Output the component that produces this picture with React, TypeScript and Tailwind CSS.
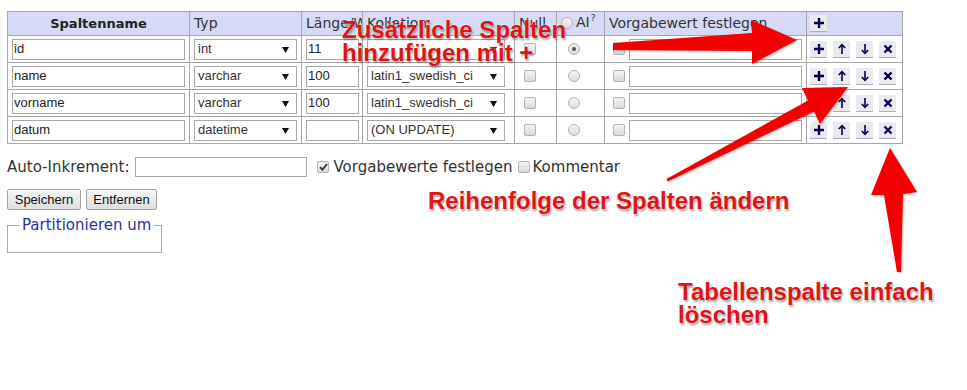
import React from 'react'

const rows = [
  { name: 'id', type: 'int', len: '11', coll: '', ai: true },
  { name: 'name', type: 'varchar', len: '100', coll: 'latin1_swedish_ci', ai: false },
  { name: 'vorname', type: 'varchar', len: '100', coll: 'latin1_swedish_ci', ai: false },
  { name: 'datum', type: 'datetime', len: '', coll: '(ON UPDATE)', ai: false },
]

const arial = "font-['Liberation_Sans',Arial,sans-serif]"

function Checkbox({ checked = false }: { checked?: boolean }) {
  return (
    <span className="inline-flex w-[12px] h-[12px] items-center justify-center rounded-[2px] border border-[#b3b3b3] bg-linear-to-b from-[#f4f4f4] to-[#d9d9d9] align-middle">
      {checked && (
        <svg width="9" height="8" viewBox="0 0 9 8">
          <path d="M1 4.2 L3.4 6.6 L8 1.2" fill="none" stroke="#333" strokeWidth="1.8" />
        </svg>
      )}
    </span>
  )
}

function Radio({ checked = false }: { checked?: boolean }) {
  return (
    <span className="inline-flex w-[12px] h-[12px] items-center justify-center rounded-full border border-[#b3b3b3] bg-linear-to-b from-[#f4f4f4] to-[#dcdcdc] align-middle">
      {checked && <span className="w-[4px] h-[4px] rounded-full bg-[#555]" />}
    </span>
  )
}

function Select({ value, width }: { value: string; width: string }) {
  return (
    <div className={`${width} h-[21px] flex items-center justify-between border border-[#a9a9a9] bg-white pl-[3px] pr-[7px] text-[13px] text-[#333] ${arial}`}>
      <span className="whitespace-nowrap">{value}</span>
      <svg width="7" height="7" viewBox="0 0 7 7">
        <polygon points="0,1 7,1 3.5,7" fill="#111" />
      </svg>
    </div>
  )
}

function TextInput({ value, width }: { value: string; width: string }) {
  return (
    <div className={`${width} h-[21px] flex items-center border border-[#a9a9a9] bg-white pl-[1px] text-[13px] text-[#222] ${arial}`}>
      {value}
    </div>
  )
}

function ActionButton({ kind }: { kind: 'plus' | 'up' | 'down' | 'del' }) {
  return (
    <span className="inline-flex w-[17px] h-[17px] items-center justify-center bg-[#e9e9ee] border-b border-[#aeaeb8]">
      <svg width="12" height="12" viewBox="0 0 12 12" fill="none" stroke="#000050">
        {kind === 'plus' && <path d="M6 1 V11 M1 6 H11" strokeWidth="2.4" />}
        {kind === 'up' && (
          <>
            <path d="M6 2.5 V11" strokeWidth="1.6" />
            <path d="M2.8 5 L6 1.6 L9.2 5" strokeWidth="1.6" />
          </>
        )}
        {kind === 'down' && (
          <>
            <path d="M6 1 V9.5" strokeWidth="1.6" />
            <path d="M2.8 7 L6 10.4 L9.2 7" strokeWidth="1.6" />
          </>
        )}
        {kind === 'del' && <path d="M2.5 2.5 L9.5 9.5 M9.5 2.5 L2.5 9.5" strokeWidth="2.4" />}
      </svg>
    </span>
  )
}

const th = 'h-[24px] border border-[#a7a7a7] bg-[#d6daf6] px-[4px] font-normal text-left text-[14px] whitespace-nowrap overflow-hidden'
const td = 'h-[27px] border border-[#a7a7a7] p-0 align-middle'
const note = "absolute font-['Liberation_Sans',Arial,sans-serif] font-bold text-[24px] leading-[23px] text-[#dc1616] whitespace-nowrap [text-shadow:0_0_2px_#fff,1px_2px_2px_rgba(0,0,0,0.4)]"

export default function App() {
  return (
    <div className="relative w-[967px] h-[390px] overflow-hidden bg-white pt-[11px] pl-[7px] font-['DejaVu_Sans',Verdana,sans-serif] text-[15px] text-[#333]">
      {/* Structure table */}
      <table className="table-fixed border-collapse w-[895px]">
        <colgroup>
          <col className="w-[182px]" />
          <col className="w-[112px]" />
          <col className="w-[61px]" />
          <col className="w-[152px]" />
          <col className="w-[42px]" />
          <col className="w-[48px]" />
          <col className="w-[202px]" />
          <col className="w-[96px]" />
        </colgroup>
        <thead>
          <tr>
            <th className={`${th} !text-center !font-bold !text-[13px] text-[#222]`}>Spaltenname</th>
            <th className={th}>Typ</th>
            <th className={th}>Länge/Werte</th>
            <th className={th}>Kollation</th>
            <th className={th}>Null</th>
            <th className={th}>
              <span className="inline-flex items-center gap-[3px]">
                <Radio />
                <span>AI</span>
                <sup className="text-[9px] -ml-[2px]">?</sup>
              </span>
            </th>
            <th className={th}>Vorgabewert festlegen</th>
            <th className={`${th} !pl-[3px]`}>
              <div className="flex">
                <ActionButton kind="plus" />
              </div>
            </th>
          </tr>
        </thead>
        <tbody>
          {rows.map((r) => (
            <tr key={r.name}>
              <td className={`${td} pl-[4px]`}>
                <TextInput value={r.name} width="w-[173px]" />
              </td>
              <td className={`${td} pl-[4px]`}>
                <Select value={r.type} width="w-[103px]" />
              </td>
              <td className={`${td} pl-[4px]`}>
                <TextInput value={r.len} width="w-[53px]" />
              </td>
              <td className={`${td} pl-[4px]`}>
                <Select value={r.coll} width="w-[138px]" />
              </td>
              <td className={`${td} pl-[9px]`}>
                <Checkbox />
              </td>
              <td className={`${td} pl-[11px]`}>
                <Radio checked={r.ai} />
              </td>
              <td className={`${td} pl-[8px]`}>
                <div className="flex items-center gap-[4px]">
                  <Checkbox />
                  <TextInput value="" width="w-[173px]" />
                </div>
              </td>
              <td className={`${td} pl-[3px]`}>
                <div className="flex gap-[6px]">
                  <ActionButton kind="plus" />
                  <ActionButton kind="up" />
                  <ActionButton kind="down" />
                  <ActionButton kind="del" />
                </div>
              </td>
            </tr>
          ))}
        </tbody>
      </table>

      {/* Options */}
      <div className="mt-[13px] h-[20px] leading-[20px] flex items-center">
        <span>Auto-Inkrement:</span>
        <div className="ml-[6px] w-[172px] h-[20px] border border-[#a9a9a9] bg-white" />
        <span className="ml-[10px] flex">
          <Checkbox checked />
        </span>
        <span className="ml-[4px]">Vorgabewerte festlegen</span>
        <span className="ml-[5px] flex">
          <Checkbox />
        </span>
        <span className="ml-[3px]">Kommentar</span>
      </div>

      <div className={`mt-[12px] flex gap-[5px] ${arial}`}>
        <button className="w-[74px] h-[21px] rounded-[2px] border border-[#a3a3a3] bg-linear-to-b from-[#f6f6f6] to-[#dedede] text-[13px] leading-[19px] text-[#111]">
          Speichern
        </button>
        <button className="w-[71px] h-[21px] rounded-[2px] border border-[#a3a3a3] bg-linear-to-b from-[#f6f6f6] to-[#dedede] text-[13px] leading-[19px] text-[#111]">
          Entfernen
        </button>
      </div>

      <fieldset className="mt-[7px] w-[155px] h-[36px] border border-[#a9a9a9] pl-[11px]">
        <legend className="px-[3px] text-[#30309a] leading-[16px]">Partitionieren um</legend>
      </fieldset>

      {/* Screenshot annotations */}
      <svg
        className="absolute inset-0 pointer-events-none [filter:drop-shadow(1px_1px_1px_rgba(0,0,0,0.3))]"
        width="967"
        height="390"
        viewBox="0 0 967 390"
      >
        <polygon points="613,43 752,33 751,20 797,40 752,64 752,51 613,50" fill="#f40000" />
        <polygon points="666.5,179 808,100.5 802,88 848,87 820,124 814,111.5 667.5,181.5" fill="#f40000" />
        <polygon points="890,148 917,192 903,194 901,272 897,272 884,195 871,195" fill="#f40000" />
      </svg>

      <div className={`${note} left-[342px] top-[18px]`}>
        Zusätzliche Spalten
        <br />
        hinzufügen mit +
      </div>
      <div className={`${note} left-[428px] top-[189px]`}>Reihenfolge der Spalten ändern</div>
      <div className={`${note} left-[678px] top-[280px]`}>
        Tabellenspalte einfach
        <br />
        löschen
      </div>
    </div>
  )
}
